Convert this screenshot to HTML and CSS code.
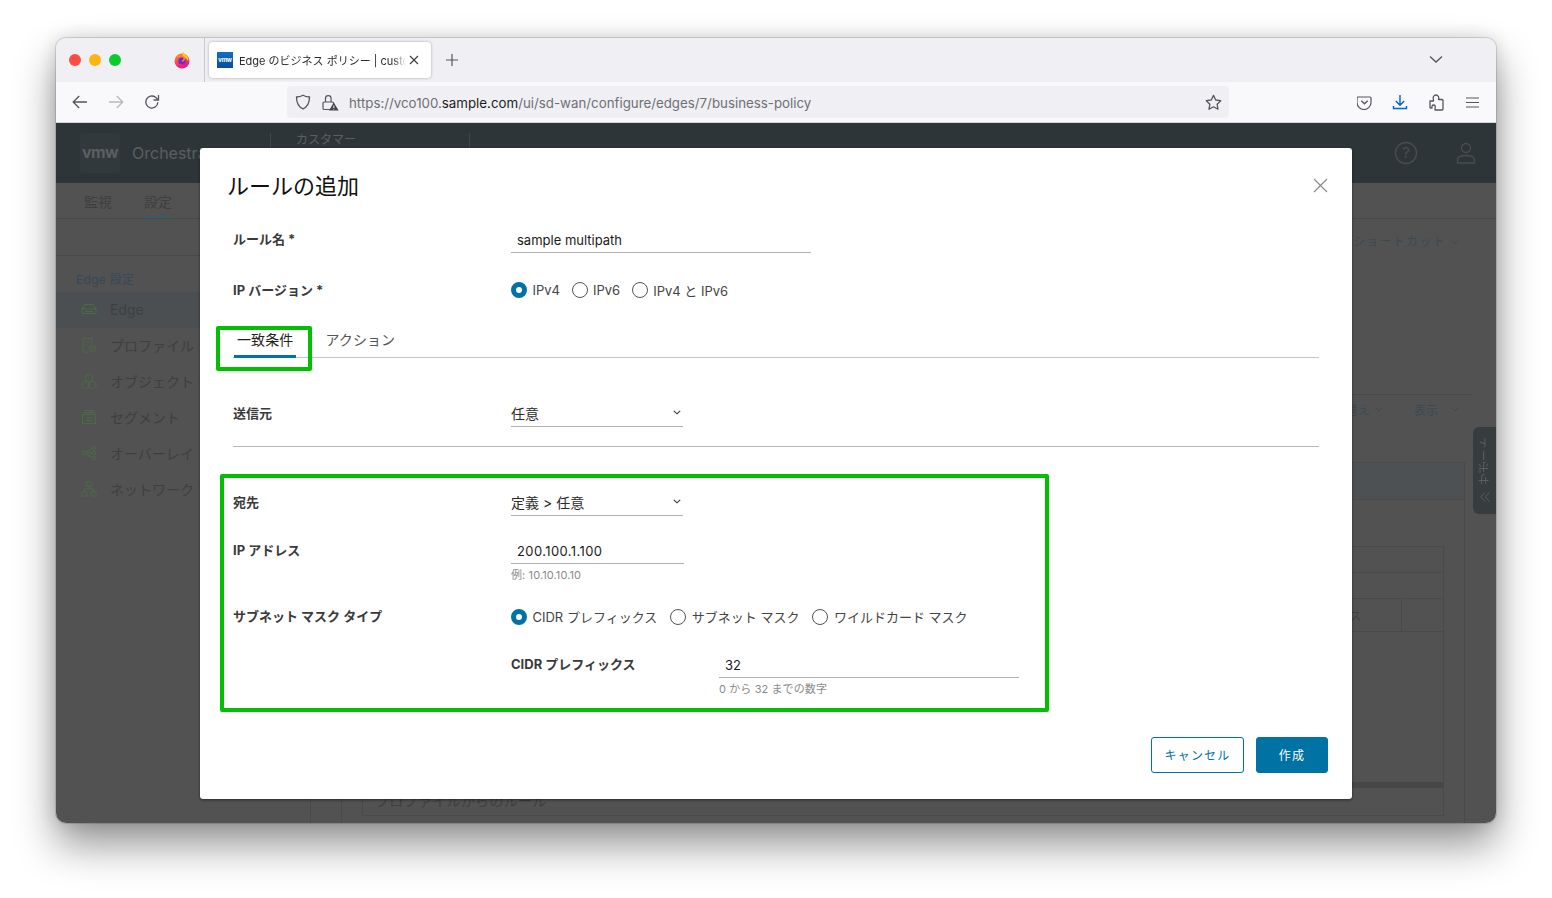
FILE: index.html
```html
<!DOCTYPE html>
<html lang="ja">
<head>
<meta charset="utf-8">
<title>ルールの追加</title>
<link rel="stylesheet" href="styles.css">
</head>
<body>
<div class="window">
  <div class="tabstrip">
    <div class="lights"><i class="light red"></i><i class="light amber"></i><i class="light green"></i></div>
    <svg class="ff" width="18" height="18" viewBox="0 0 18 18">
      <defs><linearGradient id="ffg" x1="0" y1="0" x2="0.6" y2="1"><stop offset="0" stop-color="#ff9a1f"/><stop offset=".55" stop-color="#ff3d5e"/><stop offset="1" stop-color="#e31587"/></linearGradient></defs>
      <circle cx="9" cy="10" r="7.5" fill="url(#ffg)"/>
      <path d="M10 0.5c.6 2 3 3 4.4 5 1 1.500 1.200 3 1 4.500l-3-3-3-2z" fill="#ffcb1f"/>
      <circle cx="9" cy="10" r="3.600" fill="#6a2bd0"/>
      <path d="M4 6c2-1.500 6-1.500 7 .5 1 1.800-.5 3.500-2 3.500" fill="none" stroke="#ff8a1f" stroke-width="1.600"/>
    </svg>
    <div class="tab-sep"></div>
    <div class="tab">
      <div class="favicon">vmw</div>
      <div class="tab-title">Edge のビジネス ポリシー | custo</div>
      <svg class="tab-x" width="10" height="10" viewBox="0 0 10 10"><path d="M1 1l8 8M9 1l-8 8" stroke="#3a3a40" stroke-width="1.100"/></svg>
    </div>
    <svg class="plus" width="14" height="14" viewBox="0 0 14 14"><path d="M7 1v12M1 7h12" stroke="#55555c" stroke-width="1.200"/></svg>
    <svg class="list-all" width="14" height="9" viewBox="0 0 14 9"><path d="M1 1.500l6 5.500 6-5.500" fill="none" stroke="#55555c" stroke-width="1.300"/></svg>
  </div>
  <div class="toolbar">
    <svg class="tb-back" width="16" height="14" viewBox="0 0 16 14"><path d="M15 7H1.500M7.200 1L1.200 7l6 6" fill="none" stroke="#55555c" stroke-width="1.300"/></svg>
    <svg class="tb-fwd" width="16" height="14" viewBox="0 0 16 14"><path d="M1 7h13.500M8.800 1l6 6-6 6" fill="none" stroke="#b9b9bd" stroke-width="1.300"/></svg>
    <svg class="tb-reload" width="16" height="16" viewBox="0 0 16 16"><path d="M13.800 8.200A6 6 0 1 1 11.500 3.300L14 5.500" fill="none" stroke="#55555c" stroke-width="1.300"/><path d="M14.500 1v5h-5" fill="none" stroke="#55555c" stroke-width="1.300"/></svg>
    <div class="urlbar">
      <svg class="shield" width="16" height="16" viewBox="0 0 16 16"><path d="M8 1.200c2 1.200 4 1.600 6.500 1.800 0 5.500-1.500 9.700-6.500 11.800C3 12.700 1.500 8.500 1.500 3 4 2.800 6 2.400 8 1.200z" fill="none" stroke="#55555c" stroke-width="1.300"/></svg>
      <svg class="lock" width="17" height="17" viewBox="0 0 17 17"><rect x="1" y="8" width="10.500" height="7.500" rx="1.200" fill="none" stroke="#55555c" stroke-width="1.200"/><path d="M3.500 8V4.500a2.800 2.800 0 0 1 5.600 0V8" fill="none" stroke="#55555c" stroke-width="1.200"/><path d="M11.800 8.500l4.800 8h-9.600z" fill="#45454c"/><path d="M11.800 11.500v2.500M11.800 14.800v.7" stroke="#f0f0f4" stroke-width="1"/></svg>
      <div class="url">https://vco100.<span class="url-host">sample.com</span>/ui/sd-wan/configure/edges/7/business-policy</div>
      <svg class="star" width="17" height="17" viewBox="0 0 17 17"><path d="M8.500 1.400l2.200 4.600 5 .7-3.600 3.500.9 5-4.500-2.400-4.500 2.400.9-5L1.300 6.700l5-.7z" fill="none" stroke="#55555c" stroke-width="1.300" stroke-linejoin="round"/></svg>
    </div>
    <svg class="pocket" width="15" height="15" viewBox="0 0 15 15"><path d="M1.500 1.500h12a1 1 0 0 1 1 1V7a7 7 0 0 1-14 0V2.500a1 1 0 0 1 1-1z" transform="translate(-.5 .5)" fill="none" stroke="#55555c" stroke-width="1.200"/><path d="M4.300 5.800L7.500 8.800l3.200-3" fill="none" stroke="#55555c" stroke-width="1.300"/></svg>
    <svg class="download" width="16" height="16" viewBox="0 0 16 16"><path d="M8 1v10M3.800 7L8 11.200 12.200 7M1.500 12v2.500h13V12" fill="none" stroke="#0060df" stroke-width="1.400"/></svg>
    <svg class="puzzle" width="15" height="17" viewBox="0 0 15 17"><path d="M1 7h3.500V5.500C3.200 3.500 5 1 7 1s3.500 2.500 2.500 4.500H13a1 1 0 0 1 1 1V15a1 1 0 0 1-1 1H6V14c1-1.800-.2-3-1.500-3S2.800 12 3 14H1.500A.8.800 0 0 1 1 13.500z" fill="none" stroke="#55555c" stroke-width="1.300" stroke-linejoin="round"/></svg>
    <svg class="burger" width="13" height="11" viewBox="0 0 13 11"><path d="M0 1h13M0 5.500h13M0 10h13" stroke="#55555c" stroke-width="1.200"/></svg>
  </div>

  <div class="app">
    <header class="app-head">
      <div class="logo">vmw</div>
      <div class="product">Orchestrator</div>
      <div class="head-cell">カスタマー</div>
      <div class="head-spacer"></div>
      <svg class="head-help" width="24" height="24" viewBox="0 0 24 24"><circle cx="12" cy="12" r="10.500" fill="none" stroke="#474d50" stroke-width="1.300"/><text x="12" y="17" text-anchor="middle" class="help-q">?</text></svg>
      <svg class="head-user" width="20" height="22" viewBox="0 0 20 22"><circle cx="10" cy="6" r="4.500" fill="none" stroke="#474d50" stroke-width="1.300"/><path d="M1.500 21v-3c0-3 3-4.500 8.500-4.500s8.500 1.500 8.500 4.500v3z" fill="none" stroke="#474d50" stroke-width="1.300"/></svg>
    </header>
    <nav class="app-nav">
      <div class="nav-item">監視</div>
      <div class="nav-item nav-active">設定</div>
    </nav>
    <div class="app-body">
      <aside class="side">
        <div class="side-title">Edge 設定</div>
        <div class="side-item side-current"><svg width="16" height="14" viewBox="0 0 16 14"><path d="M3.500 2.500h9L15 7v4.500H1V7zM1 7h14M4 9.500h8" fill="none" stroke="#4d6a47"/></svg><span>Edge</span></div>
        <div class="side-item"><svg width="16" height="16" viewBox="0 0 16 16"><path d="M7 15H2V1.500h9V7M4 5h5M4 8h3" fill="none" stroke="#4d6a47"/><circle cx="11.500" cy="11.500" r="3" fill="none" stroke="#4d6a47"/><circle cx="11.500" cy="11.500" r="1" fill="#4d6a47"/></svg><span>プロファイル</span></div>
        <div class="side-item"><svg width="16" height="16" viewBox="0 0 16 16"><path d="M8 1l3.500 2v4L8 9 4.500 7V3zM4.500 8L8 10v4l-3.500 2L1 14v-4zM11.500 8L15 10v4l-3.500 2L8 14v-4z" fill="none" stroke="#4d6a47"/></svg><span>オブジェクト</span></div>
        <div class="side-item"><svg width="16" height="16" viewBox="0 0 16 16"><path d="M3 1.500h10M2 3.500h12" stroke="#4d6a47"/><rect x="1.500" y="5.500" width="13" height="9" fill="none" stroke="#4d6a47"/><path d="M5 9h6M5 11.500h6" stroke="#4d6a47"/></svg><span>セグメント</span></div>
        <div class="side-item"><svg width="16" height="16" viewBox="0 0 16 16"><circle cx="3" cy="8" r="2" fill="none" stroke="#4d6a47"/><circle cx="13" cy="3" r="1.800" fill="none" stroke="#4d6a47"/><circle cx="13" cy="8" r="1.800" fill="none" stroke="#4d6a47"/><circle cx="13" cy="13" r="1.800" fill="none" stroke="#4d6a47"/><path d="M5 7l6.500-3.500M5 8h6M5 9l6.500 3.500" stroke="#4d6a47"/></svg><span>オーバーレイ</span></div>
        <div class="side-item"><svg width="16" height="16" viewBox="0 0 16 16"><rect x="5" y="1" width="6" height="4" fill="none" stroke="#4d6a47"/><rect x="1" y="11" width="5" height="4" fill="none" stroke="#4d6a47"/><rect x="10" y="11" width="5" height="4" fill="none" stroke="#4d6a47"/><path d="M8 5v3M3.500 11V8h9v3" fill="none" stroke="#4d6a47"/></svg><span>ネットワーク</span></div>
      </aside>
      <main class="main">
        <div class="shortcut">ショートカット<svg class="bg-chev" width="8" height="5" viewBox="0 0 8 5"><path d="M.8.8L4 3.800 7.200.8" fill="none" stroke="#3a4a55"/></svg></div>
        <div class="toolrow">
          <span class="tool">替え<svg class="bg-chev" width="8" height="5" viewBox="0 0 8 5"><path d="M.8.8L4 3.800 7.200.8" fill="none" stroke="#3a4a55"/></svg></span>
          <span class="tool">表示<svg class="bg-chev-wide" width="8" height="5" viewBox="0 0 8 5"><path d="M.8.8L4 3.800 7.200.8" fill="none" stroke="#3a4a55"/></svg></span>
        </div>
        <section class="card">
          <div class="card-band"></div>
          <div class="inner">
            <div class="inner-row"></div>
            <div class="inner-row"></div>
            <div class="inner-row inner-split"><span>ス</span><i></i></div>
          </div>
          <div class="profile-rules">プロファイルからのルール</div>
        </section>
      </main>
    </div>
    <div class="support">
      <span class="support-text">サポート</span>
      <svg class="support-chev" width="10" height="10" viewBox="0 0 10 10"><path d="M5 .5L.8 5 5 9.500M9.500.5L5.300 5l4.200 4.500" fill="none" stroke="#5a5f61"/></svg>
    </div>

    <div class="modal">
      <div class="modal-head">
        <h1 class="modal-title">ルールの追加</h1>
        <svg class="modal-x" width="15" height="15" viewBox="0 0 15 15"><path d="M1 1l13 13M14 1L1 14" stroke="#8c8c8c" stroke-width="1.200"/></svg>
      </div>
      <div class="row row-name">
        <label class="lbl">ルール名 *</label>
        <div class="input w300">sample multipath</div>
      </div>
      <div class="row row-ipv">
        <label class="lbl">IP バージョン *</label>
        <div class="radios radios-tight">
          <span class="radio on"></span><span class="rtext">IPv4</span>
          <span class="radio"></span><span class="rtext">IPv6</span>
          <span class="radio"></span><span class="rtext">IPv4 と IPv6</span>
        </div>
      </div>
      <div class="tabs">
        <div class="mtab mtab-on">一致条件</div>
        <div class="mtab">アクション</div>
      </div>
      <div class="row row-src">
        <label class="lbl">送信元</label>
        <div class="select">任意<svg width="8" height="5" viewBox="0 0 8 5"><path d="M.8.8L4 3.800 7.200.8" fill="none" stroke="#333" stroke-width="1.100"/></svg></div>
      </div>
      <div class="rule"></div>
      <div class="row row-dst">
        <label class="lbl">宛先</label>
        <div class="select">定義 &gt; 任意<svg width="8" height="5" viewBox="0 0 8 5"><path d="M.8.8L4 3.800 7.200.8" fill="none" stroke="#333" stroke-width="1.100"/></svg></div>
      </div>
      <div class="row row-addr">
        <label class="lbl">IP アドレス</label>
        <div class="field">
          <div class="input w173">200.100.1.100</div>
          <div class="hint">例: 10.10.10.10</div>
        </div>
      </div>
      <div class="row row-mask">
        <label class="lbl">サブネット マスク タイプ</label>
        <div class="radios">
          <span class="radio on"></span><span class="rtext">CIDR プレフィックス</span>
          <span class="radio"></span><span class="rtext">サブネット マスク</span>
          <span class="radio"></span><span class="rtext">ワイルドカード マスク</span>
        </div>
      </div>
      <div class="row row-cidr">
        <label class="lbl lbl-sub">CIDR プレフィックス</label>
        <div class="field">
          <div class="input w300">32</div>
          <div class="hint">0 から 32 までの数字</div>
        </div>
      </div>
      <div class="actions">
        <button class="btn btn-ghost">キャンセル</button>
        <button class="btn btn-primary">作成</button>
      </div>
      <div class="mark mark-tab"></div>
      <div class="mark mark-dst"></div>
    </div>
  </div>
</div>
</body>
</html>
```

FILE: styles.css
```css
* { box-sizing: border-box; }
html, body { margin: 0; height: 100%; }
body {
  background: #fff;
  padding: 38px 56px 75px;
  font-family: Inter, "Noto Sans CJK JP", sans-serif;
  overflow: hidden;
}
.window {
  height: 785px;
  display: flex;
  flex-direction: column;
  border-radius: 10px;
  overflow: hidden;
  box-shadow: 0 0 0 1px rgba(0,0,0,.13), 0 22px 42px rgba(0,0,0,.42), 0 0 18px rgba(0,0,0,.14);
  position: relative;
}

/* browser chrome */
.tabstrip { height: 44px; background: #f0f0f4; display: flex; align-items: center; flex: none; }
.lights { display: flex; gap: 8px; margin-left: 13px; }
.light { width: 12px; height: 12px; border-radius: 50%; display: block; }
.red { background: #fe4c45; }
.amber { background: #fdb60d; }
.green { background: #0ccb2c; }
.ff { margin-left: 52px; flex: none; }
.tab-sep { width: 1px; height: 44px; background: #c9c9ce; margin-left: 13px; }
.tab {
  width: 222px; height: 36px; margin-left: 4px; background: #fff; border-radius: 4px;
  box-shadow: 0 0 3px rgba(0,0,0,.3); display: flex; align-items: center; padding-left: 8px; position: relative;
}
.favicon {
  width: 16px; height: 16px; background: linear-gradient(#0f6fc6, #0a4c9e); color: #fff;
  font-size: 6px; font-weight: 700; line-height: 16px; text-align: center; flex: none; letter-spacing: -.3px;
}
.tab-title {
  margin-left: 6px; font-size: 11px; color: #2b2b30; white-space: nowrap;
  -webkit-mask-image: linear-gradient(to right, #000 154px, transparent 167px);
  mask-image: linear-gradient(to right, #000 154px, transparent 167px);
}
.tab-x { position: absolute; left: 200px; top: 13px; }
.plus { margin-left: 14px; }
.list-all { margin-left: auto; margin-right: 53px; margin-top: -2px; }

.toolbar { height: 41px; background: #f9f9fb; border-bottom: 1px solid #d6d6da; display: flex; align-items: center; flex: none; }
.tb-back { margin-left: 16px; }
.tb-fwd { margin-left: 20px; }
.tb-reload { margin-left: 20px; }
.urlbar {
  width: 942px; height: 32px; margin-left: 127px; background: #f0f0f4; border-radius: 4px;
  display: flex; align-items: center; padding-left: 8px;
}
.lock { margin-left: 11px; }
.url { margin-left: 10px; padding-top: 2px; font-size: 13.3px; color: #6f6f75; white-space: nowrap; }
.url-host { color: #1c1c20; }
.star { margin-left: auto; margin-right: 7px; }
.pocket { margin-left: 128px; }
.download { margin-left: 20px; }
.puzzle { margin-left: 21px; }
.burger { margin-left: 22px; }

/* dimmed application behind the dialog */
.app { flex: 1; min-height: 0; background: #525252; position: relative; display: flex; flex-direction: column; color: #3f3f3f; }
.app-head { height: 60px; background: #2e3538; display: flex; align-items: center; flex: none; color: #5a5f61; }
.logo {
  width: 40px; height: 40px; margin-left: 24px; background: #32393c; border-radius: 3px;
  font-size: 16px; font-weight: 700; line-height: 38px; text-align: center; letter-spacing: -.6px;
}
.product { width: 138px; margin-left: 12px; font-size: 16px; white-space: nowrap; overflow: hidden; }
.head-cell { width: 200px; height: 40px; border-left: 1px solid #40474a; border-right: 1px solid #40474a; padding-left: 25px; font-size: 12px; line-height: 14px; }
.head-spacer { flex: 1; }
.head-help { margin-right: 38px; }
.head-user { margin-right: 20px; }
.help-q { font-size: 15px; fill: #474d50; }

.app-nav { height: 36px; flex: none; display: flex; gap: 32px; padding-left: 28px; border-bottom: 1px solid #484848; align-items: stretch; }
.nav-item { font-size: 14px; line-height: 37px; width: 28px; text-align: center; }
.nav-active { border-bottom: 2px solid #3d5a6b; }

.app-body { flex: 1; min-height: 0; display: flex; overflow: hidden; }
.side { width: 254px; flex: none; padding-top: 36px; }
.side::before { content: ""; display: block; height: 1px; background: #484848; }
.side-title { font-size: 12px; color: #35495c; padding-left: 20px; height: 36px; line-height: 48px; letter-spacing: .3px; }
.side-item { height: 36px; display: flex; align-items: center; padding: 0 0 2px 25px; gap: 13px; font-size: 14px; }
.side-item svg { flex: none; }
.side-current { background: #4c4f51; }

.main { flex: 1; min-width: 0; border-left: 1px solid #4a4a4a; display: flex; flex-direction: column; }
.shortcut { align-self: flex-end; margin-right: 37px; margin-top: 14px; font-size: 12px; letter-spacing: 1.300px; color: #3a4a55; height: 18px; line-height: 18px; display: flex; align-items: center; }
.bg-chev { margin-left: 5px; }
.bg-chev-wide { margin-left: 13px; }
.toolrow { margin-top: 143px; margin-right: 24px; border-top: 1px solid #4a4a4a; display: flex; justify-content: flex-end; gap: 31px; padding: 6px 13px 0 0; font-size: 12px; color: #3a4a55; height: 68px; flex: none; }
.tool { display: flex; align-items: center; height: 16px; }
.card { margin-left: 30px; margin-right: 31px; flex: 1; border: 1px solid #4a4a4a; border-bottom: 0; display: flex; flex-direction: column; }
.card-band { height: 37px; background: #4e5153; border-bottom: 1px solid #4a4a4a; flex: none; }
.inner { margin: 46px 20px 0 20px; border: 1px solid #4a4a4a; border-bottom: 0; flex: none; height: 236px; }
.inner-row { height: 26px; border-bottom: 1px solid #4a4a4a; }
.inner-split { height: 33px; display: flex; justify-content: flex-end; align-items: center; font-size: 11px; }
.inner-split span { margin-right: 40px; }
.inner-split i { width: 1px; height: 33px; background: #4a4a4a; margin-right: 41px; }
.profile-rules { margin: 0 20px; padding: 2px 0 0 12px; border: 1px solid #4a4a4a; border-top: 6px solid #474747; height: 34px; font-size: 14px; letter-spacing: .3px; }
.support {
  position: absolute; right: 0; top: 304px; width: 23px; height: 87px; background: #373c3f; border-radius: 6px 0 0 6px;
  display: flex; flex-direction: column; align-items: center; color: #5a5f61; font-size: 12px;
}
.support-text { writing-mode: vertical-rl; transform: rotate(180deg); margin-top: 9px; height: 50px; text-align: center; white-space: nowrap; }
.support-chev { margin-top: 6px; }

/* dialog */
.modal {
  position: absolute; left: 144px; top: 25px; width: 1152px; height: 651px; background: #fff; border-radius: 3px;
  color: #2f2f2f; box-shadow: 0 1px 3px rgba(0,0,0,.5);
}
.modal-head { height: 76px; position: relative; padding: 0 0 4px 27px; display: flex; align-items: center; }
.modal-title { margin: 0; font-size: 22px; font-weight: 400; color: #111; }
.modal-x { position: absolute; right: 24px; top: 30px; }
.row { display: flex; padding-left: 33px; }
.lbl { width: 278px; flex: none; font-size: 13px; font-weight: 700; color: #3a3a3a; line-height: 30px; height: 32px; }
.lbl-sub { width: 208px; }
.row-name { height: 32px; }
.row-ipv { height: 32px; margin-top: 18px; align-items: center; }
.row-name .lbl, .row-ipv .lbl { line-height: 32px; }
.row-name .lbl { line-height: 30px; }
.row-src { height: 34px; margin-top: 40px; }
.row-dst { height: 34px; margin-top: 40px; }
.row-addr { margin-top: 14px; height: 66px; }
.row-mask { height: 32px; align-items: center; }
.row-cidr { margin-top: 16px; padding-left: 311px; height: 44px; }
.input { height: 29px; padding: 7px 6px 0; font-size: 13px; line-height: 18px; border-bottom: 1px solid #b0b0b0; color: #1a1a1a; }
.w300 { width: 300px; }
.w173 { width: 173px; letter-spacing: .4px; }
.hint { font-size: 11px; color: #8a8a8a; line-height: 14px; margin-top: 4px; letter-spacing: .1px; }
.select {
  width: 172px; height: 29px; padding: 1px 2px 0 0; border-bottom: 1px solid #b0b0b0; font-size: 14px; color: #2b2b2b;
  display: flex; justify-content: space-between; align-items: center;
}
.radios { display: flex; align-items: center; font-size: 13px; color: #444; }
.radio { width: 16px; height: 16px; border-radius: 50%; border: 1px solid #555; flex: none; background: #fff; }
.radio.on { border: 5.500px solid #0072a3; }
.rtext { margin-left: 5.500px; margin-right: 13px; padding-bottom: 2px; white-space: nowrap; }
.radios-tight .rtext { margin-right: 11.500px; padding-bottom: 0; }
.tabs { margin: 20px 33px 0; height: 32px; display: flex; border-bottom: 1px solid #c4c4c4; font-size: 14px; color: #555; }
.mtab { padding: 0 3px; line-height: 27px; height: 32px; margin-left: 1px; margin-right: 25px; letter-spacing: .1px; }
.mtab-on { color: #222; border-bottom: 3px solid #0072a3; }
.rule { height: 1px; margin: 14px 33px 0; background: #b8b8b8; }
.actions { position: absolute; right: 24px; bottom: 26px; display: flex; gap: 12px; }
.btn { height: 36px; padding: 0 0 2px; border-radius: 3px; font-family: inherit; font-size: 12px; letter-spacing: 1.200px; }
.btn-ghost { width: 93px; background: #fff; border: 1px solid #0072a3; color: #0072a3; }
.btn-primary { width: 72px; background: #0072a3; border: 1px solid #0072a3; color: #fff; }
.mark { position: absolute; border: 4px solid #00c000; border-radius: 2px; pointer-events: none; }
.mark-tab { left: 16px; top: 178px; width: 96px; height: 45px; }
.mark-dst { left: 20px; top: 326px; width: 829px; height: 238px; }
```
